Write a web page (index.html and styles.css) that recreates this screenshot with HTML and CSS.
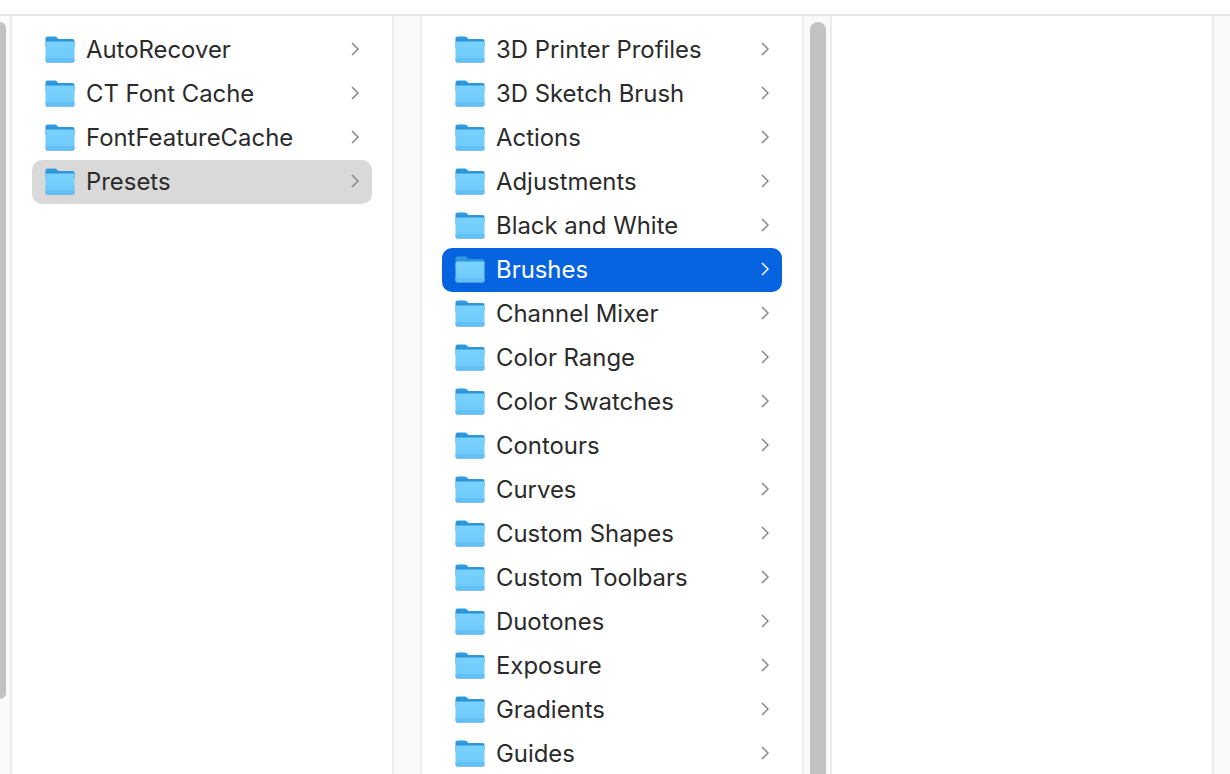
FILE: index.html
```html
<!DOCTYPE html>
<html lang="en">
<head>
<meta charset="utf-8">
<title>Finder columns</title>
<link rel="stylesheet" href="styles.css">
</head>
<body>
<svg class="defs" width="0" height="0" aria-hidden="true">
  <defs>
    <linearGradient id="fb" x1="0" y1="0" x2="0" y2="1">
      <stop offset="0" stop-color="#7ad2fd"/>
      <stop offset="1" stop-color="#6cc8fb"/>
    </linearGradient>
    <linearGradient id="ft" x1="0" y1="0" x2="0" y2="1">
      <stop offset="0" stop-color="#359ee0"/>
      <stop offset="1" stop-color="#1c85cd"/>
    </linearGradient>
    <symbol id="folder" viewBox="0 0 30 27">
      <path d="M2.500.5h7c1.200 0 1.900.4 2.700 1.200L13.500 3H27.500c1.100 0 2 .9 2 2v6H.5V2.500C.5 1.400 1.400.5 2.500.5z" fill="url(#ft)"/>
      <path d="M.5 7.200c0-.9.7-1.600 1.600-1.600h25.800c.9 0 1.600.7 1.600 1.600V24.500c0 1.100-.9 2-2 2H2.500c-1.100 0-2-.9-2-2z" fill="url(#fb)"/>
      <path d="M.5 22.500h29v2.200H.5z" fill="#62bdf2"/>
      <path d="M.5 24.400c0 .8.900 1.300 2 1.300h25c1.100 0 2-.5 2-1.300v.3c0 1.100-.9 1.800-2 1.800h-25c-1.100 0-2-.7-2-1.800z" fill="#4a9fd9"/>
    </symbol>
    <symbol id="chev" viewBox="0 0 8 14">
      <path d="M1 1l6 6-6 6" fill="none" stroke="currentColor" stroke-width="1.500"/>
    </symbol>
  </defs>
</svg>
<div class="topbar"></div>
<main class="browser">
  <div class="gutter gutter-first"><div class="thumb thumb-first"></div></div>
  <ul class="column">
    <li class="row"><svg class="folder"><use href="#folder"/></svg><span class="name">AutoRecover</span><svg class="chevron"><use href="#chev"/></svg></li>
    <li class="row"><svg class="folder"><use href="#folder"/></svg><span class="name">CT Font Cache</span><svg class="chevron"><use href="#chev"/></svg></li>
    <li class="row"><svg class="folder"><use href="#folder"/></svg><span class="name">FontFeatureCache</span><svg class="chevron"><use href="#chev"/></svg></li>
    <li class="row row-inactive"><svg class="folder"><use href="#folder"/></svg><span class="name">Presets</span><svg class="chevron"><use href="#chev"/></svg></li>
  </ul>
  <div class="gutter"></div>
  <ul class="column">
    <li class="row"><svg class="folder"><use href="#folder"/></svg><span class="name">3D Printer Profiles</span><svg class="chevron"><use href="#chev"/></svg></li>
    <li class="row"><svg class="folder"><use href="#folder"/></svg><span class="name">3D Sketch Brush</span><svg class="chevron"><use href="#chev"/></svg></li>
    <li class="row"><svg class="folder"><use href="#folder"/></svg><span class="name">Actions</span><svg class="chevron"><use href="#chev"/></svg></li>
    <li class="row"><svg class="folder"><use href="#folder"/></svg><span class="name">Adjustments</span><svg class="chevron"><use href="#chev"/></svg></li>
    <li class="row"><svg class="folder"><use href="#folder"/></svg><span class="name">Black and White</span><svg class="chevron"><use href="#chev"/></svg></li>
    <li class="row row-active"><svg class="folder"><use href="#folder"/></svg><span class="name">Brushes</span><svg class="chevron"><use href="#chev"/></svg></li>
    <li class="row"><svg class="folder"><use href="#folder"/></svg><span class="name">Channel Mixer</span><svg class="chevron"><use href="#chev"/></svg></li>
    <li class="row"><svg class="folder"><use href="#folder"/></svg><span class="name">Color Range</span><svg class="chevron"><use href="#chev"/></svg></li>
    <li class="row"><svg class="folder"><use href="#folder"/></svg><span class="name">Color Swatches</span><svg class="chevron"><use href="#chev"/></svg></li>
    <li class="row"><svg class="folder"><use href="#folder"/></svg><span class="name">Contours</span><svg class="chevron"><use href="#chev"/></svg></li>
    <li class="row"><svg class="folder"><use href="#folder"/></svg><span class="name">Curves</span><svg class="chevron"><use href="#chev"/></svg></li>
    <li class="row"><svg class="folder"><use href="#folder"/></svg><span class="name">Custom Shapes</span><svg class="chevron"><use href="#chev"/></svg></li>
    <li class="row"><svg class="folder"><use href="#folder"/></svg><span class="name">Custom Toolbars</span><svg class="chevron"><use href="#chev"/></svg></li>
    <li class="row"><svg class="folder"><use href="#folder"/></svg><span class="name">Duotones</span><svg class="chevron"><use href="#chev"/></svg></li>
    <li class="row"><svg class="folder"><use href="#folder"/></svg><span class="name">Exposure</span><svg class="chevron"><use href="#chev"/></svg></li>
    <li class="row"><svg class="folder"><use href="#folder"/></svg><span class="name">Gradients</span><svg class="chevron"><use href="#chev"/></svg></li>
    <li class="row"><svg class="folder"><use href="#folder"/></svg><span class="name">Guides</span><svg class="chevron"><use href="#chev"/></svg></li>
  </ul>
  <div class="gutter gutter-scroll"><div class="thumb thumb-second"></div></div>
  <div class="column column-empty"></div>
  <div class="gutter gutter-last"></div>
</main>
</body>
</html>
```
FILE: styles.css
```css
* { box-sizing: border-box; }
html, body {
  margin: 0;
  height: 774px;
  overflow: hidden;
  background: #fff;
}
body {
  display: flex;
  flex-direction: column;
  font-family: Inter, "Liberation Sans", sans-serif;
}
.defs { position: absolute; }
.topbar {
  height: 16px;
  flex: none;
  border-bottom: 2px solid #e6e6e6;
}
.browser {
  flex: 1;
  min-height: 0;
  display: grid;
  grid-template-columns: 12px 380px 30px 380px 30px 380px 18px;
  overflow: hidden;
}
.gutter {
  background: #fafafa;
  border-left: 2px solid #ececec;
  border-right: 2px solid #ececec;
}
.gutter-first {
  border-left: 0;
  padding-top: 6px;
}
.gutter-scroll { padding: 6px 4px 0 6px; }
.gutter-last { border-right: 0; }
.thumb { background: #c2c2c2; }
.thumb-first {
  width: 6px;
  height: 677px;
  border-radius: 0 6px 6px 0;
}
.thumb-second {
  width: 16px;
  height: 800px;
  border-radius: 8px 8px 0 0;
}
.column {
  list-style: none;
  margin: 0;
  padding: 12px 20px 0;
  background: #fff;
}
.row {
  height: 44px;
  display: flex;
  align-items: center;
  padding-left: 13px;
  border-radius: 10px;
  font-size: 23.9px;
  color: #2b2b2b;
}
.folder {
  width: 30px;
  height: 27px;
  flex: none;
  margin-right: 11px;
  margin-bottom: 1px;
}
.name {
  flex: 1;
  white-space: nowrap;
  padding-bottom: 2px;
}
.chevron {
  width: 8px;
  height: 14px;
  flex: none;
  margin-right: 13px;
  margin-bottom: 2px;
  color: #858585;
}
.row-inactive { background: #d9d9d9; }
.row-active { background: #0764e1; color: #fff; }
.row-active .chevron { color: #fff; }
```
